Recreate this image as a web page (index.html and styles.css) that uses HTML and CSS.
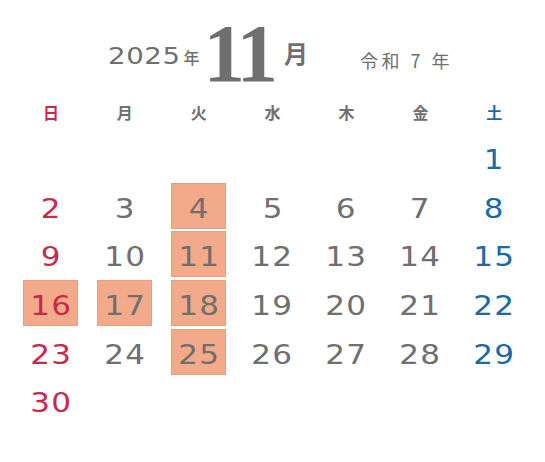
FILE: index.html
```html
<!DOCTYPE html>
<html lang="ja">
<head>
<meta charset="utf-8">
<link rel="stylesheet" href="styles.css">
</head>
<body>
<div class="cal">
  <div class="head">
    <div class="year"><span class="yn">2025</span><span class="yk">年</span></div>
    <div class="mon">11</div>
    <div class="monk">月</div>
    <div class="era">令和 7 年</div>
  </div>
  <div class="week">
    <div class="wd sun">日</div>
    <div class="wd">月</div>
    <div class="wd">火</div>
    <div class="wd">水</div>
    <div class="wd">木</div>
    <div class="wd">金</div>
    <div class="wd sat">土</div>
  </div>
  <div class="days">
    <div class="c"></div><div class="c"></div><div class="c"></div><div class="c"></div><div class="c"></div><div class="c"></div>
    <div class="c sat"><div class="box"><span class="n">1</span></div></div>

    <div class="c sun"><div class="box"><span class="n">2</span></div></div>
    <div class="c"><div class="box"><span class="n">3</span></div></div>
    <div class="c"><div class="box hl"><span class="n">4</span></div></div>
    <div class="c"><div class="box"><span class="n">5</span></div></div>
    <div class="c"><div class="box"><span class="n">6</span></div></div>
    <div class="c"><div class="box"><span class="n">7</span></div></div>
    <div class="c sat"><div class="box"><span class="n">8</span></div></div>

    <div class="c sun"><div class="box"><span class="n">9</span></div></div>
    <div class="c"><div class="box"><span class="n">10</span></div></div>
    <div class="c"><div class="box hl"><span class="n">11</span></div></div>
    <div class="c"><div class="box"><span class="n">12</span></div></div>
    <div class="c"><div class="box"><span class="n">13</span></div></div>
    <div class="c"><div class="box"><span class="n">14</span></div></div>
    <div class="c sat"><div class="box"><span class="n">15</span></div></div>

    <div class="c sun"><div class="box hl"><span class="n">16</span></div></div>
    <div class="c"><div class="box hl"><span class="n">17</span></div></div>
    <div class="c"><div class="box hl"><span class="n">18</span></div></div>
    <div class="c"><div class="box"><span class="n">19</span></div></div>
    <div class="c"><div class="box"><span class="n">20</span></div></div>
    <div class="c"><div class="box"><span class="n">21</span></div></div>
    <div class="c sat"><div class="box"><span class="n">22</span></div></div>

    <div class="c sun"><div class="box"><span class="n">23</span></div></div>
    <div class="c"><div class="box"><span class="n">24</span></div></div>
    <div class="c"><div class="box hl"><span class="n">25</span></div></div>
    <div class="c"><div class="box"><span class="n">26</span></div></div>
    <div class="c"><div class="box"><span class="n">27</span></div></div>
    <div class="c"><div class="box"><span class="n">28</span></div></div>
    <div class="c sat"><div class="box"><span class="n">29</span></div></div>

    <div class="c sun"><div class="box"><span class="n">30</span></div></div>
    <div class="c"></div><div class="c"></div><div class="c"></div><div class="c"></div><div class="c"></div><div class="c"></div>
  </div>
</div>
</body>
</html>
```
FILE: styles.css
```css
html, body {
  margin: 0;
  padding: 0;
  background: #ffffff;
}
.cal {
  width: 545px;
  height: 462px;
  color: #6f6f6f;
  font-family: "DejaVu Sans", sans-serif;
}
.head {
  display: flex;
  align-items: flex-start;
  height: 100px;
  padding-left: 108px;
  box-sizing: border-box;
}
.year {
  margin-top: 45px;
  display: flex;
  align-items: baseline;
  line-height: 23px;
}
.yn {
  font-size: 23px;
  display: inline-block;
  transform: scaleX(1.2);
  transform-origin: left center;
  letter-spacing: 0.5px;
  margin-right: 15px;
}
.yk {
  font-family: "Noto Sans CJK JP", sans-serif;
  font-size: 16px;
  font-weight: 500;
}
.mon {
  margin-top: 12px;
  margin-left: 4px;
  font-family: "Liberation Serif", serif;
  font-weight: bold;
  font-size: 83px;
  line-height: 83px;
  letter-spacing: -4px;
}
.monk {
  margin-top: 38px;
  margin-left: 10px;
  font-family: "Noto Sans CJK JP", sans-serif;
  font-weight: 700;
  font-size: 24px;
  line-height: 30px;
}
.era {
  margin-top: 50px;
  margin-left: 52px;
  font-family: "Noto Sans CJK JP", sans-serif;
  font-size: 18px;
  line-height: 20px;
  letter-spacing: 3.5px;
}
.week {
  display: grid;
  grid-template-columns: repeat(7, 73.9px);
  padding-left: 14px;
  height: 24px;
  margin-bottom: 10px;
}
.wd {
  text-align: center;
  font-family: "Noto Sans CJK JP", sans-serif;
  font-weight: 700;
  font-size: 16px;
  line-height: 24px;
}
.days {
  display: grid;
  grid-template-columns: repeat(7, 73.9px);
  grid-auto-rows: 46px;
  row-gap: 2.7px;
  padding-left: 14px;
}
.c {
  display: flex;
  justify-content: center;
}
.sun { color: #c92a4b; }
.sat { color: #1c69a8; }
.box {
  width: 55px;
  height: 46px;
  box-sizing: border-box;
  display: flex;
  justify-content: center;
  align-items: flex-start;
  padding-top: 10px;
}
.box.hl {
  background: #f3aa8a;
  border: 1px solid #e59f82;
  padding-top: 9px;
}
.n {
  display: inline-block;
  font-size: 27px;
  line-height: 32px;
  letter-spacing: 1px;
  transform: scaleX(1.15);
}
```
